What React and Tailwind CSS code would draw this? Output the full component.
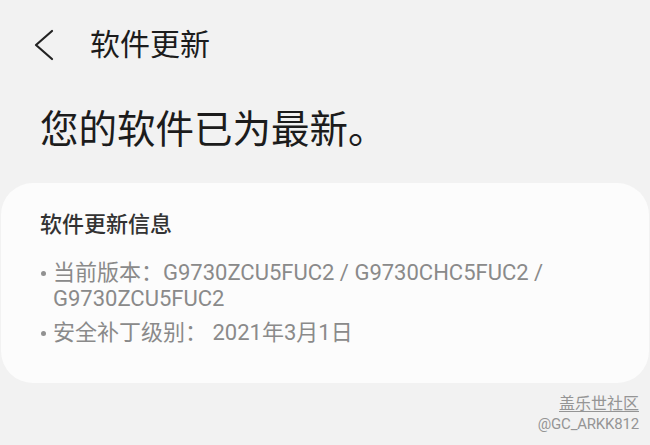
import React from 'react';

const font = { fontFamily: 'Roboto, "Noto Sans CJK SC", sans-serif' };

const Bullet = ({ children }) => (
  <div className="flex items-start">
    <div className="mt-[11px] w-[5px] h-[5px] rounded-full bg-[#919191] shrink-0" />
    <div className="ml-[7px]">{children}</div>
  </div>
);

export default function App() {
  return (
    <div className="w-[650px] h-[445px] bg-[#f2f2f2] overflow-hidden relative" style={font}>
      <div className="flex items-center h-[90px] pl-[33px]">
        <svg width="22" height="32" viewBox="0 0 22 32">
          <path d="M19 2 L3 16 L19 30" fill="none" stroke="#222" strokeWidth="2.2" strokeLinecap="round" strokeLinejoin="round" />
        </svg>
        <h1 className="ml-[35px] text-[30px] leading-[34px] text-[#1c1c1c]">软件更新</h1>
      </div>
      <div className="pl-[40px] mt-[20px] text-[38.5px] leading-[40px] text-[#1c1c1c]">您的软件已为最新。</div>
      <div className="mt-[33px] mx-[1px] h-[200px] rounded-[32px] bg-[#fcfcfc] pl-[39px] pt-[27px]">
        <div className="text-[22px] leading-[30px] font-medium text-[#333]">软件更新信息</div>
        <div className="mt-[20px] pl-[1px] text-[22px] leading-[26px] text-[#8a8a8a] flex flex-col gap-[8px]">
          <Bullet>当前版本：G9730ZCU5FUC2 / G9730CHC5FUC2 /<br />G9730ZCU5FUC2</Bullet>
          <Bullet>安全补丁级别： 2021年3月1日</Bullet>
        </div>
      </div>
      <div className="absolute right-[11px] top-[394px] text-right text-[#959595]">
        <div className="text-[16px] leading-[20px] underline underline-offset-2">盖乐世社区</div>
        <div className="text-[15px] leading-[20px] tracking-[-0.2px]">@GC_ARKK812</div>
      </div>
    </div>
  );
}
